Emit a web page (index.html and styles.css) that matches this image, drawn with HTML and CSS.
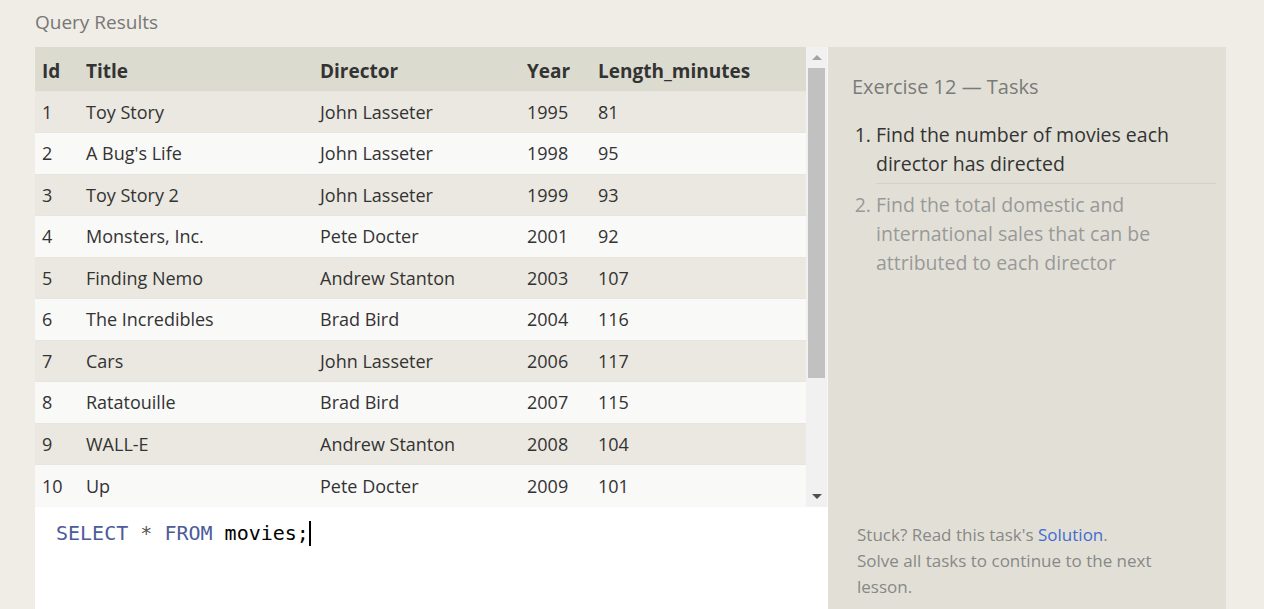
FILE: index.html
```html
<!DOCTYPE html>
<html>
<head>
<meta charset="utf-8">
<link rel="stylesheet" href="styles.css">
</head>
<body>
<div class="page">
  <h2 class="page-title">Query Results</h2>
  <div class="main">
    <div class="left">
      <div class="results">
        <div class="table-wrap">
          <table class="results-table">
            <colgroup>
              <col class="c-id"><col class="c-title"><col class="c-dir"><col class="c-year"><col>
            </colgroup>
            <thead>
              <tr><th>Id</th><th>Title</th><th>Director</th><th>Year</th><th>Length_minutes</th></tr>
            </thead>
            <tbody>
              <tr><td>1</td><td>Toy Story</td><td>John Lasseter</td><td>1995</td><td>81</td></tr>
              <tr><td>2</td><td>A Bug's Life</td><td>John Lasseter</td><td>1998</td><td>95</td></tr>
              <tr><td>3</td><td>Toy Story 2</td><td>John Lasseter</td><td>1999</td><td>93</td></tr>
              <tr><td>4</td><td>Monsters, Inc.</td><td>Pete Docter</td><td>2001</td><td>92</td></tr>
              <tr><td>5</td><td>Finding Nemo</td><td>Andrew Stanton</td><td>2003</td><td>107</td></tr>
              <tr><td>6</td><td>The Incredibles</td><td>Brad Bird</td><td>2004</td><td>116</td></tr>
              <tr><td>7</td><td>Cars</td><td>John Lasseter</td><td>2006</td><td>117</td></tr>
              <tr><td>8</td><td>Ratatouille</td><td>Brad Bird</td><td>2007</td><td>115</td></tr>
              <tr><td>9</td><td>WALL-E</td><td>Andrew Stanton</td><td>2008</td><td>104</td></tr>
              <tr><td>10</td><td>Up</td><td>Pete Docter</td><td>2009</td><td>101</td></tr>
            </tbody>
          </table>
        </div>
        <div class="scrollbar">
          <div class="arrow arrow-up"></div>
          <div class="track"><div class="thumb"></div></div>
          <div class="arrow arrow-down"></div>
        </div>
      </div>
      <div class="editor">
        <div class="code"><span class="kw">SELECT</span> <span class="op">*</span> <span class="kw">FROM</span> <span class="ident">movies;</span><span class="cursor"></span></div>
      </div>
    </div>
    <div class="tasks">
      <h3 class="tasks-title">Exercise 12 — Tasks</h3>
      <ol class="task-list">
        <li class="task active">Find the number of movies each director has directed</li>
        <li class="task">Find the total domestic and international sales that can be attributed to each director</li>
      </ol>
      <div class="spacer"></div>
      <p class="hint">Stuck? Read this task's <a class="link">Solution</a>.<br>Solve all tasks to continue to the next lesson.</p>
    </div>
  </div>
</div>
</body>
</html>
```

FILE: styles.css
```css
html, body {
  margin: 0;
  padding: 0;
  height: 100%;
  overflow: hidden;
}
body {
  background: #f0ede6;
  font-family: "Open Sans", "Noto Sans", sans-serif;
  color: #333;
}
.page {
  padding: 0 38px 0 35px;
}
.page-title {
  margin: 0;
  height: 47px;
  line-height: 45px;
  font-size: 19px;
  font-weight: 400;
  color: #777;
}
.main {
  display: flex;
  height: 562px;
}
.left {
  width: 793px;
  display: flex;
  flex-direction: column;
}
.results {
  display: flex;
  height: 460px;
  background: #f8f8f6;
}
.table-wrap {
  flex: 1;
  overflow: hidden;
}
.results-table {
  width: 100%;
  table-layout: fixed;
  border-collapse: collapse;
  font-size: 18px;
}
.results-table th {
  text-align: left;
  font-weight: 700;
  font-size: 19px;
  background: #dcdbd0;
  height: 44px;
  padding: 4px 0 0 7px;
  box-sizing: border-box;
  color: #333;
  white-space: nowrap;
}
.results-table td {
  height: 41.5px;
  padding: 0 0 0 7px;
  box-sizing: border-box;
  border-top: 1px solid #e6e5df;
  white-space: nowrap;
}
.results-table tbody tr:nth-child(odd) td {
  background: #eae8e0;
}
.results-table tbody tr:nth-child(even) td {
  background: #f9f9f8;
}
.c-id { width: 44px; }
.c-title { width: 234px; }
.c-dir { width: 207px; }
.c-year { width: 71px; }

.scrollbar {
  width: 22px;
  background: #f1f1f1;
  display: flex;
  flex-direction: column;
  border-right: 1px solid #f6f6f4;
  box-sizing: border-box;
}
.arrow {
  height: 21px;
  display: flex;
  align-items: center;
  justify-content: center;
}
.arrow-up::before {
  content: "";
  border-left: 5px solid transparent;
  border-right: 5px solid transparent;
  border-bottom: 5px solid #a3a3a3;
}
.arrow-down::before {
  content: "";
  border-left: 5px solid transparent;
  border-right: 5px solid transparent;
  border-top: 5px solid #505050;
}
.track {
  flex: 1;
  padding: 0 2px;
}
.thumb {
  height: 310px;
  background: #c1c1c1;
}

.editor {
  flex: 1;
  background: #fff;
  padding: 13px 0 0 21px;
}
.code {
  font-family: "DejaVu Sans Mono", "Liberation Mono", monospace;
  font-size: 20px;
  line-height: 26px;
  color: #000;
  white-space: pre;
}
.kw { color: #4d5b9a; }
.op { color: #555; }
.cursor {
  display: inline-block;
  width: 2px;
  height: 25px;
  background: #000;
  vertical-align: -6px;
}

.tasks {
  width: 398px;
  background: #e2e0d6;
  box-sizing: border-box;
  padding: 24px 10px 9px 24px;
  display: flex;
  flex-direction: column;
}
.tasks-title {
  margin: 0;
  font-size: 20px;
  font-weight: 400;
  color: #7a7a7a;
  line-height: 32px;
}
.task-list {
  margin: 17px 0 0;
  padding: 0 0 0 24px;
  font-size: 19.5px;
  line-height: 29px;
}
.task {
  color: #999;
  padding: 0 0 4px;
}
.task.active {
  color: #333;
  border-bottom: 1px solid #d4d2c8;
  padding-bottom: 5px;
  margin-bottom: 6px;
}
.spacer { flex: 1; }
.hint {
  margin: 0;
  padding-left: 5px;
  max-width: 310px;
  font-size: 17px;
  line-height: 26px;
  color: #888;
}
.link {
  color: #3f6ccf;
}
```
